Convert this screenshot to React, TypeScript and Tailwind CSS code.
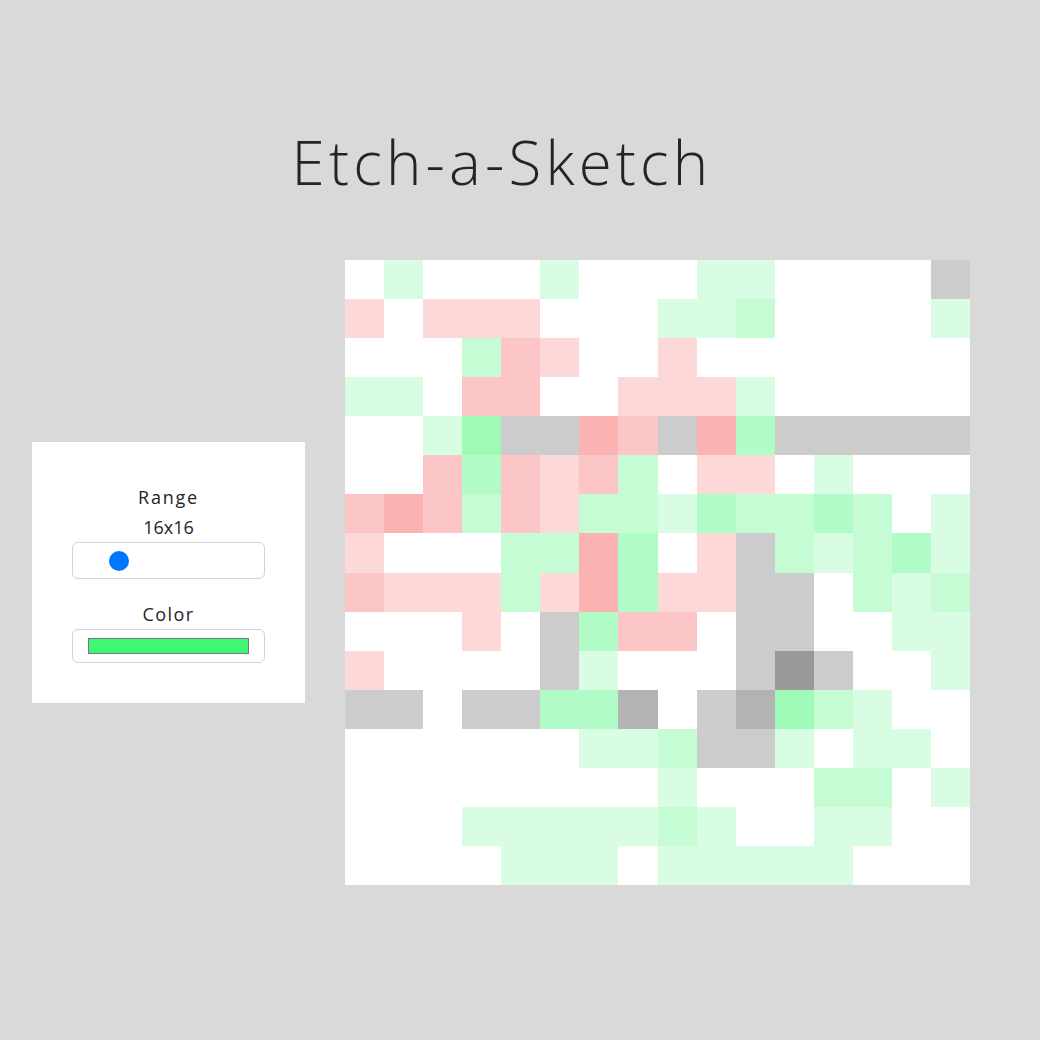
import React from 'react';

// one letter per cell, 16 rows of 16
const rows = [
  'WaWWWaWWWaaWWWWx',
  'pWpppWWWaabWWWWa',
  'WWWbqpWWpWWWWWWW',
  'aaWqqWWpppaWWWWW',
  'WWadxxrqxrcxxxxx',
  'WWqcqpqbWppWaWWW',
  'qrqbqpbbacbbcbWa',
  'pWWWbbrcWpxbabca',
  'qpppbprcppxxWbab',
  'WWWpWxcqqWxxWWaa',
  'pWWWWxaWWWxzxWWa',
  'xxWxxccyWxydbaWW',
  'WWWWWWaabxxaWaaW',
  'WWWWWWWWaWWWbbWa',
  'WWWaaaaabaWWaaWW',
  'WWWWaaaWaaaaaWWW',
];

const cellClass: Record<string, string> = {
  W: 'bg-white',
  a: 'bg-[#d8fde2]',
  b: 'bg-[#c5fcd4]',
  c: 'bg-[#b1fbc6]',
  d: 'bg-[#9efab7]',
  p: 'bg-[#fdd8d8]',
  q: 'bg-[#fcc5c6]',
  r: 'bg-[#fbb2b2]',
  x: 'bg-[#cccccc]',
  y: 'bg-[#b3b3b3]',
  z: 'bg-[#999999]',
};

function Controls() {
  return (
    <div className="w-[273px] h-[261px] pt-[2px] bg-white flex flex-col items-center justify-center text-[#212529] font-['Open_Sans',sans-serif]">
      <div className="text-[18px] leading-[24px] tracking-[0.1em]">Range</div>
      <div className="mt-[6px] text-[18px] leading-[24px]">16x16</div>
      <div className="relative mt-[3px] w-[193px] h-[37px] rounded-[6px] border border-[#ced4da]">
        <div className="absolute left-[36px] top-[8px] w-[20px] h-[20px] rounded-full bg-[#0075ff]" />
      </div>
      <div className="mt-[23px] text-[18px] leading-[24px] tracking-[0.08em]">Color</div>
      <div className="mt-[3px] w-[193px] h-[34px] rounded-[6px] border border-[#ced4da] flex items-center justify-center">
        <div className="w-[161px] h-[16px] border border-[#777777] bg-[#3df870]" />
      </div>
    </div>
  );
}

export default function App() {
  return (
    <div className="min-h-screen bg-[#d9d9d9] pt-[126px]">
      {/* Title */}
      <h1 className="pr-[36px] text-center text-[60px] leading-[72px] font-light tracking-[0.07em] text-[#212529] font-['Open_Sans',sans-serif]">
        Etch-a-Sketch
      </h1>

      <div className="mt-[62px] pl-[32px] flex items-center gap-[40px]">
        <Controls />

        {/* Sketch grid */}
        <div className="grid grid-cols-16 grid-rows-16 w-[625px] h-[625px]">
          {rows.map((row, i) =>
            row.split('').map((ch, j) => (
              <div key={`${i}-${j}`} className={cellClass[ch]} />
            ))
          )}
        </div>
      </div>
    </div>
  );
}
